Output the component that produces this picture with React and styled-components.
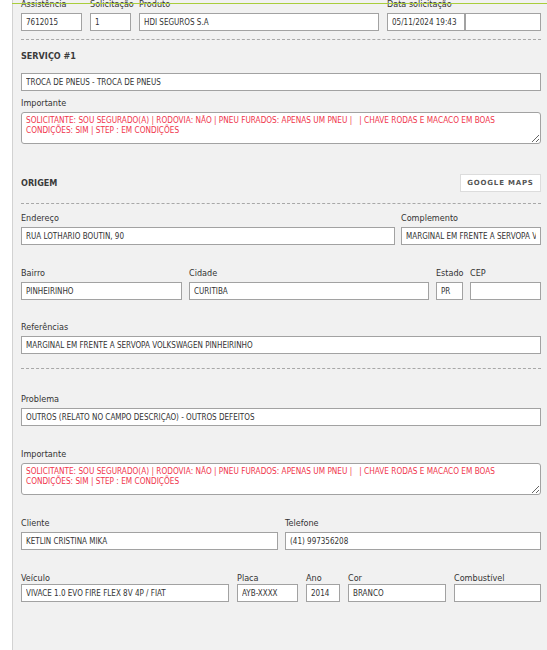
import React from "react";
import styled, { createGlobalStyle } from "styled-components";

const GlobalStyle = createGlobalStyle`
  html, body {
    margin: 0;
    padding: 0;
    background: #ffffff;
  }
  body {
    font-family: "DejaVu Sans Condensed", "DejaVu Sans", sans-serif;
    font-stretch: condensed;
    color: #333;
  }
`;

const Page = styled.div`
  position: relative;
  display: flex;
  height: 650px;
  overflow: hidden;
`;

const TopLine = styled.div`
  position: absolute;
  top: 3px;
  left: 12px;
  right: 0;
  height: 1px;
  background: #a9cd3c;
  z-index: 5;
`;

const Gutter = styled.div`
  width: 12px;
  flex-shrink: 0;
  background: #ffffff;
  border-right: 1px solid #d2d2d2;
`;

const Panel = styled.div`
  flex: 1;
  background: #f1f1f1;
  padding: 0 6px 40px 8px;
  margin-top: -2px;
`;

const Row = styled.div`
  display: grid;
  grid-template-columns: ${(p) => p.$cols || "1fr"};
  column-gap: ${(p) => p.$gap || 8}px;
  margin-top: ${(p) => p.$mt || 0}px;
`;

const Field = styled.div`
  display: flex;
  flex-direction: column;
  min-width: 0;
`;

const Label = styled.label`
  font-size: 9px;
  line-height: 13px;
  height: 13px;
  color: #333;
  margin-bottom: ${(p) => (p.$tight ? -1 : 2)}px;
  white-space: nowrap;
`;

const Input = styled.input`
  box-sizing: border-box;
  width: 100%;
  height: 18px;
  margin: 0;
  padding: 0 4px;
  border: 1px solid #a2a2a2;
  border-radius: 0;
  background: #ffffff;
  font-family: inherit;
  font-stretch: condensed;
  font-size: 8px;
  color: #333;
  outline: none;
`;

const Pair = styled.div`
  display: grid;
  grid-template-columns: 78px 1fr;
`;

const Note = styled.textarea`
  box-sizing: border-box;
  width: 100%;
  height: 32px;
  margin: 0;
  padding: 2px 4px;
  border: 1px solid #a2a2a2;
  border-radius: 3px;
  background: #ffffff;
  font-family: inherit;
  font-stretch: condensed;
  font-size: 8.2px;
  line-height: 10px;
  color: #f0354c;
  resize: vertical;
  outline: none;
  display: block;
`;

const Divider = styled.hr`
  margin: ${(p) => p.$mt || 0}px 0 0;
  border: 0;
  border-top: 1px dashed #a8a8a8;
  height: 0;
`;

const Title = styled.h3`
  margin: ${(p) => p.$mt || 0}px 0 0;
  font-size: 9px;
  line-height: 13px;
  font-weight: bold;
  color: #3a3a3a;
`;

const SectionHead = styled.div`
  display: flex;
  align-items: center;
  justify-content: space-between;
  height: 18px;
  margin-top: ${(p) => p.$mt || 0}px;

  ${Title} {
    margin: 0;
  }
`;

const MapButton = styled.button`
  box-sizing: border-box;
  width: 81px;
  height: 18px;
  padding: 0;
  border: 1px solid #dcdcdc;
  background: #ffffff;
  font-family: "DejaVu Sans", sans-serif;
  font-size: 7px;
  font-weight: bold;
  letter-spacing: 0.8px;
  color: #555;
  cursor: pointer;
`;

const importante =
  "SOLICITANTE: SOU SEGURADO(A) | RODOVIA: NÃO | PNEU FURADOS: APENAS UM PNEU |   | CHAVE RODAS E MACACO EM BOAS CONDIÇÕES: SIM | STEP : EM CONDIÇÕES";

const TextField = ({ label, value, tight }) => (
  <Field>
    <Label $tight={tight}>{label}</Label>
    <Input readOnly value={value || ""} />
  </Field>
);

const App = () => {
  return (
    <>
      <GlobalStyle />
      <Page>
        <TopLine />
        <Gutter />
        <Panel>
          <Row $cols="61px 41px 240px 154px">
            <TextField label="Assistência" value="7612015" />
            <TextField label="Solicitação" value="1" />
            <TextField label="Produto" value="HDI SEGUROS S.A" />
            <Field>
              <Label>Data solicitação</Label>
              <Pair>
                <Input readOnly value="05/11/2024 19:43" />
                <Input readOnly value="" />
              </Pair>
            </Field>
          </Row>

          <Divider $mt={8} />
          <Title $mt={10}>SERVIÇO #1</Title>

          <Row $mt={10}>
            <Input readOnly value="TROCA DE PNEUS - TROCA DE PNEUS" />
          </Row>
          <Row $mt={6}>
            <Field>
              <Label>Importante</Label>
              <Note readOnly value={importante} />
            </Field>
          </Row>

          <SectionHead $mt={30}>
            <Title>ORIGEM</Title>
            <MapButton type="button">GOOGLE MAPS</MapButton>
          </SectionHead>

          <Divider $mt={11} />

          <Row $mt={8} $cols="374px 140px" $gap={6}>
            <TextField label="Endereço" value="RUA LOTHÁRIO BOUTIN, 90" />
            <TextField
              label="Complemento"
              value="MARGINAL EM FRENTE A SERVOPA VOLKSWAGEN PINHEIRINHO"
            />
          </Row>

          <Row $mt={22} $cols="161px 240px 27px 71px" $gap={7}>
            <TextField label="Bairro" value="PINHEIRINHO" />
            <TextField label="Cidade" value="CURITIBA" />
            <TextField label="Estado" value="PR" />
            <TextField label="CEP" value="" />
          </Row>

          <Row $mt={21}>
            <TextField
              label="Referências"
              value="MARGINAL EM FRENTE A SERVOPA VOLKSWAGEN PINHEIRINHO"
            />
          </Row>

          <Divider $mt={14} />

          <Row $mt={24}>
            <TextField
              label="Problema"
              value="OUTROS (RELATO NO CAMPO DESCRIÇÃO) - OUTROS DEFEITOS"
            />
          </Row>
          <Row $mt={22}>
            <Field>
              <Label>Importante</Label>
              <Note readOnly value={importante} />
            </Field>
          </Row>

          <Row $mt={22} $cols="257px 256px" $gap={7}>
            <TextField label="Cliente" value="KETLIN CRISTINA MIKA" />
            <TextField label="Telefone" value="(41) 997356208" />
          </Row>

          <Row $mt={22} $cols="208px 61px 34px 98px 87px" $gap={8}>
            <TextField tight label="Veículo" value="VIVACE 1.0 EVO FIRE FLEX 8V 4P / FIAT" />
            <TextField tight label="Placa" value="AYB-XXXX" />
            <TextField tight label="Ano" value="2014" />
            <TextField tight label="Cor" value="BRANCO" />
            <TextField tight label="Combustível" value="" />
          </Row>
        </Panel>
      </Page>
    </>
  );
};

export default App;
